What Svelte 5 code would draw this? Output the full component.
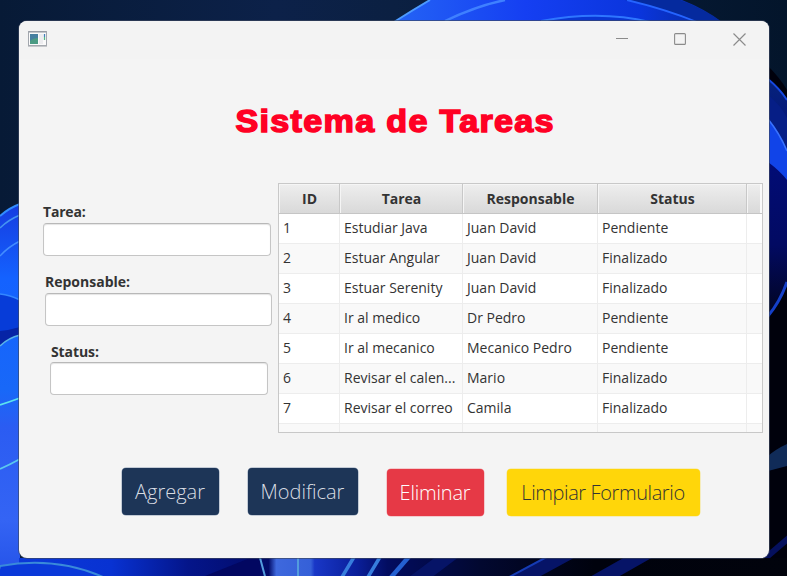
<script>
  const fields = [
    { label: 'Tarea:', id: 'tarea' },
    { label: 'Reponsable:', id: 'responsable' },
    { label: 'Status:', id: 'status' }
  ];
  const columns = ['ID', 'Tarea', 'Responsable', 'Status', ''];
  const rows = [
    ['1', 'Estudiar Java', 'Juan David', 'Pendiente', ''],
    ['2', 'Estuar Angular', 'Juan David', 'Finalizado', ''],
    ['3', 'Estuar Serenity', 'Juan David', 'Finalizado', ''],
    ['4', 'Ir al medico', 'Dr Pedro', 'Pendiente', ''],
    ['5', 'Ir al mecanico', 'Mecanico Pedro', 'Pendiente', ''],
    ['6', 'Revisar el calen...', 'Mario', 'Finalizado', ''],
    ['7', 'Revisar el correo', 'Camila', 'Finalizado', ''],
    ['', '', '', '', '']
  ];
</script>

<div class="desktop">
  <svg class="wallpaper" width="787" height="576" viewBox="0 0 787 576" aria-hidden="true">
    <defs>
      <linearGradient id="sky" x1="0" y1="0" x2="1" y2="0">
        <stop offset="0" stop-color="#071a36" />
        <stop offset=".35" stop-color="#0c2149" />
        <stop offset=".5" stop-color="#0b2042" />
        <stop offset="1" stop-color="#03152b" />
      </linearGradient>
      <linearGradient id="leftEdge" x1="0" y1="0" x2="0" y2="1">
        <stop offset="0" stop-color="#163ce0" />
        <stop offset=".2" stop-color="#1462ff" />
        <stop offset=".5" stop-color="#1868f8" />
        <stop offset=".6" stop-color="#2b5cf2" />
        <stop offset=".85" stop-color="#3464f4" />
        <stop offset="1" stop-color="#2452e8" />
      </linearGradient>
      <linearGradient id="topPetal" x1="0" y1="0" x2="1" y2="0">
        <stop offset="0" stop-color="#2463f5" />
        <stop offset=".4" stop-color="#153ff2" />
        <stop offset=".75" stop-color="#0a35dc" />
        <stop offset="1" stop-color="#062a98" />
      </linearGradient>
      <linearGradient id="rightPetal" x1="0" y1="0" x2="0" y2="1">
        <stop offset="0" stop-color="#06237c" />
        <stop offset=".35" stop-color="#020c76" />
        <stop offset=".7" stop-color="#020a62" />
        <stop offset="1" stop-color="#01051f" />
      </linearGradient>
      <linearGradient id="floor" x1="0" y1="0" x2="1" y2="0">
        <stop offset="0" stop-color="#0b38d8" />
        <stop offset=".12" stop-color="#0832d2" />
        <stop offset=".22" stop-color="#04158a" />
        <stop offset=".325" stop-color="#020b68" />
        <stop offset=".335" stop-color="#3e68dd" />
        <stop offset=".38" stop-color="#3560d8" />
        <stop offset=".385" stop-color="#1937c7" />
        <stop offset=".44" stop-color="#0a1f9a" />
        <stop offset=".48" stop-color="#020c60" />
        <stop offset=".6" stop-color="#020830" />
        <stop offset=".75" stop-color="#00020d" />
        <stop offset="1" stop-color="#01030c" />
      </linearGradient>
    </defs>
    <rect width="787" height="576" fill="url(#sky)" />

    <path d="M394 22Q413 10 430 0H682Q705 9 722 22Z" fill="url(#topPetal)" />
    <path d="M394 22Q413 10 430 0" fill="none" stroke="#4c9aff" stroke-width="2" />
    <path d="M445 21Q476 6 505 0" fill="none" stroke="#3f80ff" stroke-width="2.4" />
    <path d="M541 21Q600 10 650 22" fill="#0a36d4" stroke="#2e76ff" stroke-width="1.8" />
    <path d="M625 0Q665 9 695 22H722Q700 7 680 0Z" fill="#052a9e" />
    <path d="M627 0Q665 9 697 22" fill="none" stroke="#2564ff" stroke-width="1.8" />

    <path d="M768 66Q780 78 787 90V576H768Z" fill="#00010c" />
    <path d="M768 79Q780 89 787 100V282Q779 300 768 316Z" fill="url(#rightPetal)" />
    <path d="M768 79Q780 89 787 100" fill="none" stroke="#1648e0" stroke-width="2" />
    <path d="M768 95Q781 105 787 118V155Q778 135 768 124Z" fill="#061e86" />
    <path d="M768 119Q780 134 787 151V180Q780 171 768 162Z" fill="#1144e8" />
    <path d="M768 119Q780 134 787 151" fill="none" stroke="#3972ff" stroke-width="1.6" />
    <path d="M768 316Q780 302 787 282" fill="none" stroke="#143fc8" stroke-width="3" />
    <path d="M768 456Q776 449 787 444V466L768 471Z" fill="#102b58" />
    <path d="M740 580L790 537" stroke="#05105d" stroke-width="6" />

    <path d="M0 216Q9 208 20 204V576H0Z" fill="url(#leftEdge)" />
    <path d="M0 216Q9 208 20 204" fill="none" stroke="#328cff" stroke-width="2" />
    <path d="M0 228Q8 220 20 215" fill="none" stroke="#4594f2" stroke-width="1.5" />
    <path d="M0 256Q8 247 20 241" fill="none" stroke="#438dff" stroke-width="1.5" />
    <path d="M0 294Q10 295 20 300V334Q9 338 0 346Z" fill="#073cd8" />
    <path d="M0 294Q10 295 20 300" fill="none" stroke="#3387ff" stroke-width="1.5" />
    <path d="M0 331Q10 330 20 327V335Q8 338 0 346Z" fill="#0624a6" />
    <path d="M0 346Q8 338 20 335" fill="none" stroke="#5ab4e8" stroke-width="1.5" />
    <path d="M0 405Q9 402 20 398" fill="none" stroke="#5ce3ee" stroke-width="1.8" />
    <path d="M0 469Q9 465 20 459" fill="none" stroke="#5bc9ee" stroke-width="1.8" />

    <rect x="19" y="558" width="768" height="18" fill="url(#floor)" />
    <path d="M0 566Q55 556 103 577H-3Z" fill="#0a39d9" stroke="#398ada" stroke-width="2" />
    <path d="M205 576L250 558H260V576Z" fill="#020761" />
    <g fill="none" stroke="#539cdd" stroke-width="2">
      <path d="M259 554L266 580M298 554V580" />
      <path d="M357 552L339 582M383 552L365 582" stroke="#377ddd" stroke-width="3.5" />
      <path d="M413 552L387 582" stroke="#2460d2" stroke-width="4.5" />
    </g>
    <path d="M454 552L414 582M570 552L508 586M648 552L588 586" stroke="#061467" stroke-width="14" />
    <path d="M556 552L500 582" stroke="#153bb4" stroke-width="2" />
  </svg>

  <main class="window">
    <header class="titlebar">
      <svg width="20" height="16" viewBox="0 0 20 16" aria-hidden="true">
        <rect x=".5" y=".5" width="18" height="14" fill="#fafafa" stroke="#a2a6ad" />
        <path d="M1 1H18" stroke="#8d939c" />
        <path d="M0 15.4H19" stroke="#c1c3c6" />
        <rect x="2" y="3" width="8" height="10" fill="#4b9b83" />
        <path d="M2 3H10V7Q5 7 2 10Z" fill="#457fa0" />
        <rect x="11" y="3" width="4" height="10" fill="#ececef" />
        <path d="M16.5 3V6" stroke="#437fba" stroke-width="1.3" />
        <path d="M16.5 6V9" stroke="#54b585" stroke-width="1.3" />
      </svg>
      <div class="controls">
        <svg width="12" height="12" viewBox="0 0 12 12"><path d="M0 5.5H12" stroke="#8b8b8b" /></svg>
        <svg width="12" height="12" viewBox="0 0 12 12"><rect x=".6" y=".6" width="10.8" height="10.8" rx="1" fill="none" stroke="#8b8b8b" stroke-width="1.1" /></svg>
        <svg width="13" height="13" viewBox="0 0 13 13"><path d="M.5.5L12.5 12.5M12.5.5L.5 12.5" stroke="#8b8b8b" stroke-width="1.15" /></svg>
      </div>
    </header>

    <h1><span>Sistema de Tareas</span></h1>

    <section class="content">
      <form>
        {#each fields as field}
          <div class="field {field.id}">
            <label for={field.id}>{field.label}</label>
            <input id={field.id} type="text" />
          </div>
        {/each}
      </form>

      <div class="table">
        <div class="row head">
          {#each columns as column}
            <div class="cell"><span>{column}</span></div>
          {/each}
        </div>
        {#each rows as row}
          <div class="row">
            {#each row as value}
              <div class="cell">{value}</div>
            {/each}
          </div>
        {/each}
      </div>
    </section>

    <footer>
      <button class="add">Agregar</button>
      <button class="edit">Modificar</button>
      <button class="delete">Eliminar</button>
      <button class="clear">Limpiar Formulario</button>
    </footer>
  </main>
</div>

<style>
  :global(body) { margin: 0; overflow: hidden; }
  .desktop {
    position: relative;
    box-sizing: border-box;
    width: 787px;
    height: 576px;
    padding: 21px 18px 18px 19px;
    overflow: hidden;
    font-family: 'Open Sans', 'Noto Sans', sans-serif;
  }
  .wallpaper { position: absolute; inset: 0; }
  .window {
    position: relative;
    width: 750px;
    height: 537px;
    border-radius: 8px;
    background: #f4f4f4;
    box-shadow: 0 0 0 1px rgba(60, 70, 95, .65);
    overflow: hidden;
    display: flex;
    flex-direction: column;
  }
  .titlebar {
    display: flex;
    justify-content: space-between;
    box-sizing: border-box;
    height: 38px;
    padding: 10px 23.5px 0 9px;
    background: #f3f3f3;
  }
  .controls { display: flex; gap: 46px; padding-top: 2px; }
  .controls svg:last-child { margin-left: .5px; }
  h1 {
    margin: 0;
    height: 124px;
    display: flex;
    justify-content: center;
    padding-top: 43px;
    box-sizing: border-box;
    color: #ff0024;
    font: 700 31px/40px 'Liberation Sans', Arial, sans-serif;
    white-space: nowrap;
  }
  h1 span { transform: translateX(1px) scaleX(1.1); -webkit-text-stroke: 1.5px #ff0024; letter-spacing: 1.2px; }
  .content { display: flex; height: 250px; }
  form { width: 259px; flex: none; }
  .field { display: flex; flex-direction: column; margin-left: 24px; width: 228px; height: 70px; }
  .field.tarea { margin-top: 19px; }
  .field.responsable { margin-left: 26px; width: 227px; }
  .field.status { margin-left: 31px; width: 218px; }
  label {
    height: 21px;
    color: #333;
    font-size: 14px;
    line-height: 20px;
    font-weight: 700;
    letter-spacing: 0;
  }
  .tarea label { letter-spacing: -.2px; }
  .status label { height: 20px; padding-left: 1px; letter-spacing: -.1px; }
  input {
    box-sizing: border-box;
    width: 100%;
    height: 33px;
    border: 1px solid #c5c5c5;
    border-top-color: #b8b8b8;
    border-radius: 4px;
    background: #fff;
    box-shadow: inset 0 1px 1px #e5e5e5;
    outline: none;
  }
  .table {
    box-sizing: border-box;
    width: 485px;
    height: 250px;
    border: 1px solid #c8c8c8;
    overflow: hidden;
    background: #fff;
  }
  .row {
    box-sizing: border-box;
    display: grid;
    grid-template-columns: 61px 123px 135px 149px 15px;
    height: 30px;
    border-bottom: 1px solid #ededed;
    color: #333;
    font-size: 14px;
    line-height: 27px;
    letter-spacing: 0;
  }
  .row:nth-child(odd) { background: #f9f9f9; }
  .cell {
    box-sizing: border-box;
    padding-left: 4px;
    border-right: 1px solid #ededed;
    white-space: nowrap;
    overflow: hidden;
  }
  .cell:last-child { border-right: 0; }
  .row.head {
    background: linear-gradient(#eee, #d9d9d9);
    border-bottom-color: #c5c5c5;
    box-shadow: inset 0 1px #f7f7f7;
    font-weight: 700;
    line-height: 29px;
    text-align: center;
  }
  .head .cell { padding: 0 0 0 1px; border-right-color: #c8c8c8; box-shadow: inset 1px 1px #f5f5f5; }
  .head .cell:last-child { border-right: 2px solid #fafafa; }
  footer { display: flex; align-items: flex-start; padding: 35px 0 0 102.5px; }
  button {
    box-sizing: border-box;
    height: 47px;
    padding: 0;
    border: 0;
    border-radius: 4px;
    font: 350 20px/46px 'Open Sans', sans-serif;
    white-space: nowrap;
  }
  .add, .edit { background: #1d3557; color: #d8dce2; box-shadow: 0 0 0 .5px #8fa0b5; }
  .add { width: 97px; margin-right: 29px; }
  .edit { width: 110px; margin-right: 29px; }
  .delete { width: 97px; margin: 1px 23px 0 0; background: #e63946; color: #fff; box-shadow: 0 0 0 .5px #efa1a7; letter-spacing: -.2px; }
  .clear { width: 193px; margin-top: 1px; background: #ffd60a; color: #333; box-shadow: 0 0 0 .5px #f5e486; letter-spacing: -.4px; }
</style>
